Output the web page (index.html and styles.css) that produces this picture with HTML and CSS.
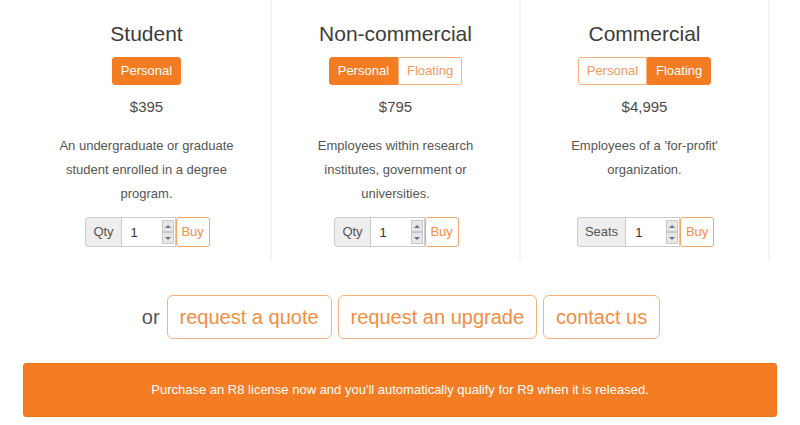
FILE: index.html
```html
<!DOCTYPE html>
<html>
<head>
<meta charset="utf-8">
<link rel="stylesheet" href="styles.css">
</head>
<body>
<div class="page">
  <div class="plans">
    <div class="plan">
      <h2 class="plan-title">Student</h2>
      <div class="toggle">
        <span class="tbtn active">Personal</span>
      </div>
      <div class="price">$395</div>
      <p class="desc">An undergraduate or graduate student enrolled in a degree program.</p>
      <div class="buy-group">
        <span class="addon">Qty</span>
        <span class="qty"><span class="qty-val">1</span><span class="spin"><span class="spin-up"></span><span class="spin-down"></span></span></span>
        <span class="buy">Buy</span>
      </div>
    </div>
    <div class="plan">
      <h2 class="plan-title">Non-commercial</h2>
      <div class="toggle">
        <span class="tbtn active">Personal</span><span class="tbtn">Floating</span>
      </div>
      <div class="price">$795</div>
      <p class="desc">Employees within research institutes, government or universities.</p>
      <div class="buy-group">
        <span class="addon">Qty</span>
        <span class="qty"><span class="qty-val">1</span><span class="spin"><span class="spin-up"></span><span class="spin-down"></span></span></span>
        <span class="buy">Buy</span>
      </div>
    </div>
    <div class="plan">
      <h2 class="plan-title">Commercial</h2>
      <div class="toggle">
        <span class="tbtn">Personal</span><span class="tbtn active">Floating</span>
      </div>
      <div class="price">$4,995</div>
      <p class="desc">Employees of a 'for-profit' organization.</p>
      <div class="buy-group">
        <span class="addon">Seats</span>
        <span class="qty"><span class="qty-val">1</span><span class="spin"><span class="spin-up"></span><span class="spin-down"></span></span></span>
        <span class="buy">Buy</span>
      </div>
    </div>
  </div>
  <div class="more">
    <span class="or">or</span>
    <a class="obtn">request a quote</a>
    <a class="obtn">request an upgrade</a>
    <a class="obtn">contact us</a>
  </div>
  <div class="alert">Purchase an R8 license now and you'll automatically qualify for R9 when it is released.</div>
</div>
</body>
</html>
```

FILE: styles.css
```css
html, body {
  margin: 0;
  padding: 0;
  background: #fff;
}
body {
  font-family: "Liberation Sans", Arial, sans-serif;
  color: #444;
}
.page {
  padding-left: 23px;
  width: 754px;
}
.plans {
  display: grid;
  grid-template-columns: 249px 249px 249px;
}
.plan {
  box-sizing: border-box;
  height: 261px;
  border-right: 2px solid #f4f4f4;
  padding-top: 22px;
  padding-bottom: 14px;
  display: flex;
  flex-direction: column;
  align-items: center;
  text-align: center;
}
.plan-title {
  margin: 0 0 11px;
  font-size: 21px;
  line-height: 24px;
  font-weight: normal;
  color: #3c3c3c;
}
.toggle {
  display: flex;
  height: 28px;
}
.tbtn {
  box-sizing: border-box;
  height: 28px;
  padding: 0 8px;
  font-size: 13px;
  line-height: 26px;
  border: 1px solid #f9b07a;
  color: #f7975a;
  background: #fff;
}
.tbtn:first-child {
  border-radius: 3px 0 0 3px;
}
.tbtn:last-child {
  border-radius: 0 3px 3px 0;
}
.tbtn:only-child {
  border-radius: 3px;
}
.tbtn.active {
  background: #f47c22;
  border-color: #f47c22;
  color: #fff;
}
.price {
  margin-top: 11px;
  font-size: 15px;
  line-height: 22px;
  color: #4a4a4a;
}
.desc {
  margin: 16px 0 0;
  width: 200px;
  font-size: 13px;
  line-height: 24px;
  color: #555;
}
.buy-group {
  margin-top: auto;
  display: flex;
  height: 30px;
  padding-left: 2px;
}
.addon {
  box-sizing: border-box;
  height: 30px;
  padding: 0 7px;
  background: #eee;
  border: 1px solid #ccc;
  border-right: 0;
  border-radius: 4px 0 0 4px;
  font-size: 13px;
  line-height: 28px;
  color: #555;
}
.qty {
  box-sizing: border-box;
  width: 55px;
  height: 30px;
  border: 1px solid #ccc;
  background: #fff;
  display: flex;
  align-items: center;
  justify-content: space-between;
  padding: 0 1px 0 9px;
}
.qty-val {
  font-size: 13px;
  color: #333;
}
.spin {
  display: flex;
  flex-direction: column;
  width: 12px;
  height: 24px;
}
.spin-up, .spin-down {
  flex: 1;
  box-sizing: border-box;
  background: #e6e6e6;
  border: 1px solid #c8c8c8;
  display: flex;
  align-items: center;
  justify-content: center;
}
.spin-up::after {
  content: "";
  border-left: 3px solid transparent;
  border-right: 3px solid transparent;
  border-bottom: 3px solid #6a6f8c;
}
.spin-down::after {
  content: "";
  border-left: 3px solid transparent;
  border-right: 3px solid transparent;
  border-top: 3px solid #6a6f8c;
}
.buy {
  box-sizing: border-box;
  height: 30px;
  width: 34px;
  border: 1px solid #f7a466;
  border-radius: 3px;
  font-size: 13px;
  line-height: 28px;
  color: #f58d44;
  background: #fff;
}
.more {
  margin-top: 34px;
  display: flex;
  justify-content: center;
  align-items: center;
  gap: 6px;
  padding-left: 2px;
}
.or {
  font-size: 20px;
  color: #555;
  margin-right: 1px;
}
.obtn {
  box-sizing: border-box;
  height: 44px;
  padding: 0 12px;
  border: 1px solid #f8b07c;
  border-radius: 6px;
  font-size: 20px;
  line-height: 42px;
  color: #f58d44;
}
.alert {
  margin-top: 24px;
  box-sizing: border-box;
  height: 54px;
  background: #f47c22;
  border: 1px solid #ef7418;
  border-radius: 3px;
  color: #fff;
  font-size: 13px;
  line-height: 52px;
  text-align: center;
}
```
